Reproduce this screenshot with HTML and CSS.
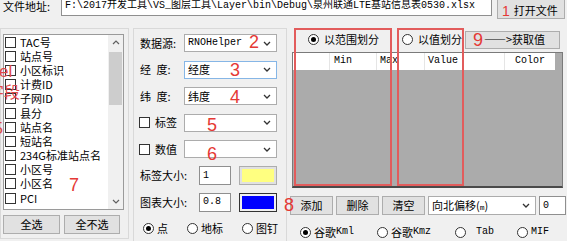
FILE: index.html
```html
<!DOCTYPE html>
<html lang="zh-CN">
<head>
  <meta charset="UTF-8">
  <title>图层工具</title>
  <link rel="stylesheet" href="styles.css">
</head>
<body>
<div class="toprow">
  <span class="file-label">文件地址:</span>
  <div class="pathbox mono">F:\2017开发工具\VS_图层工具\Layer\bin\Debug\泉州联通LTE基站信息表0530.xlsx</div>
  <button class="btn open-btn"><span class="num-in num-1">1</span>打开文件</button>
</div>

<div class="main">
  <div class="group fields">
    <div class="listbox">
      <div class="items">
        <div class="item"><span class="check"></span>TAC号</div>
        <div class="item"><span class="check"></span>站点号</div>
        <div class="item"><span class="check"></span>小区标识</div>
        <div class="item"><span class="check"></span>计费ID</div>
        <div class="item"><span class="check"></span>子网ID</div>
        <div class="item"><span class="check"></span>县分</div>
        <div class="item"><span class="check"></span>站点名</div>
        <div class="item"><span class="check"></span>短站名</div>
        <div class="item"><span class="check"></span>234G标准站点名</div>
        <div class="item"><span class="check"></span>小区号</div>
        <div class="item"><span class="check"></span>小区名</div>
        <div class="item"><span class="check"></span>PCI</div>
      </div>
      <div class="vscroll">
        <div class="arrow"><svg width="8" height="5" viewBox="0 0 8 5"><path d="M1 4l3-3 3 3" fill="none" stroke="#606060" stroke-width="1.2"/></svg></div>
        <div class="thumb"></div>
        <div class="track"></div>
        <div class="arrow"><svg width="8" height="5" viewBox="0 0 8 5"><path d="M1 1l3 3 3-3" fill="none" stroke="#606060" stroke-width="1.2"/></svg></div>
      </div>
    </div>
    <div class="btnrow">
      <button class="btn sel-all">全选</button>
      <button class="btn sel-none">全不选</button>
    </div>
  </div>

  <div class="group props">
    <div class="row">
      <span class="lbl">数据源:</span>
      <div class="combo"><span class="mono">RNOHelper</span><svg width="8" height="5" viewBox="0 0 8 5"><path d="M1 1l3 3 3-3" fill="none" stroke="#333" stroke-width="1.3"/></svg></div>
    </div>
    <div class="row">
      <span class="lbl">经&ensp;度:</span>
      <div class="combo focus"><span>经度</span><svg width="8" height="5" viewBox="0 0 8 5"><path d="M1 1l3 3 3-3" fill="none" stroke="#333" stroke-width="1.3"/></svg></div>
    </div>
    <div class="row">
      <span class="lbl">纬&ensp;度:</span>
      <div class="combo"><span>纬度</span><svg width="8" height="5" viewBox="0 0 8 5"><path d="M1 1l3 3 3-3" fill="none" stroke="#333" stroke-width="1.3"/></svg></div>
    </div>
    <div class="row">
      <span class="lbl chk-lbl"><span class="check"></span>标签</span>
      <div class="combo"><span></span><svg width="8" height="5" viewBox="0 0 8 5"><path d="M1 1l3 3 3-3" fill="none" stroke="#333" stroke-width="1.3"/></svg></div>
    </div>
    <div class="row">
      <span class="lbl chk-lbl"><span class="check"></span>数值</span>
      <div class="combo"><span></span><svg width="8" height="5" viewBox="0 0 8 5"><path d="M1 1l3 3 3-3" fill="none" stroke="#333" stroke-width="1.3"/></svg></div>
    </div>
    <div class="row">
      <span class="lbl lbl-wide">标签大小:</span>
      <div class="tbox mono">1</div>
      <div class="swatch swatch-yellow"><div></div></div>
    </div>
    <div class="row">
      <span class="lbl lbl-wide">图表大小:</span>
      <div class="tbox mono">0.8</div>
      <div class="swatch swatch-blue"><div></div></div>
    </div>
    <div class="row radios">
      <span class="opt"><span class="radio on"></span>点</span>
      <span class="opt"><span class="radio"></span>地标</span>
      <span class="opt"><span class="radio"></span>图钉</span>
    </div>
  </div>

  <div class="ranges">
    <div class="mode-row">
      <span class="opt"><span class="radio on"></span>以范围划分</span>
      <span class="opt mode-value"><span class="radio"></span>以值划分</span>
      <button class="btn fetch-btn"><span class="num-in num-9">9</span>——&gt;获取值</button>
    </div>
    <div class="grid">
      <div class="grid-head mono">
        <span class="col c0"></span>
        <span class="col c-min">Min</span>
        <span class="col c-max">Max</span>
        <span class="col c-val">Value</span>
        <span class="col c-color">Color</span>
      </div>
    </div>
    <div class="actions">
      <button class="btn act">添加</button>
      <button class="btn act">删除</button>
      <button class="btn act">清空</button>
      <div class="combo offset"><span>向北偏移(<span class="mono small">m</span>)</span><svg width="8" height="5" viewBox="0 0 8 5"><path d="M1 1l3 3 3-3" fill="none" stroke="#333" stroke-width="1.3"/></svg></div>
      <div class="tbox offset-val mono">0</div>
    </div>
    <div class="formats">
      <span class="opt f-kml"><span class="radio on"></span>谷歌<span class="mono">Kml</span></span>
      <span class="opt f-kmz"><span class="radio"></span>谷歌<span class="mono">Kmz</span></span>
      <span class="opt f-tab"><span class="radio"></span><span class="mono">Tab</span></span>
      <span class="opt f-mif"><span class="radio"></span><span class="mono">MIF</span></span>
    </div>
  </div>
</div>

<!-- red annotations drawn over the form -->
<div class="frame frame-range"></div>
<div class="frame frame-value"></div>
<span class="num n2">2</span>
<span class="num n3">3</span>
<span class="num n4">4</span>
<span class="num n5">5</span>
<span class="num n6">6</span>
<span class="num n7">7</span>
<span class="num n8">8</span>
<span class="side side-el">el</span>
<span class="side side-zd">字段</span>
<span class="side side-5">5</span>
</body>
</html>
```

FILE: styles.css
```css
* {
  box-sizing: border-box;
}

body {
  margin: 0;
  width: 567px;
  height: 241px;
  overflow: hidden;
  position: relative;
  background-color: #f0f0f0;
  font-family: "Noto Sans CJK SC", "Liberation Sans", sans-serif;
  font-size: 11px;
  line-height: 1;
  color: #000;
}

.mono {
  font-family: "Liberation Mono", "Noto Sans CJK SC", monospace;
  font-size: 10px;
}

.mono.small {
  font-size: 8px;
}

.btn {
  font: inherit;
  color: #000;
  background-color: #e1e1e1;
  border: 1px solid #adadad;
  padding: 0;
  margin: 0;
  display: flex;
  align-items: center;
  justify-content: center;
}

/* top row */
.toprow {
  display: flex;
  align-items: flex-start;
  height: 20px;
  margin-top: -4px;
}

.file-label {
  width: 61px;
  height: 20px;
  padding-left: 3px;
  display: flex;
  align-items: center;
}

.pathbox {
  width: 431px;
  height: 20px;
  background-color: #fff;
  border: 1px solid #8f8f8f;
  padding-left: 3px;
  display: flex;
  align-items: center;
  white-space: nowrap;
  overflow: hidden;
}

.open-btn {
  width: 68px;
  height: 20px;
  margin-left: 5px;
  margin-top: 3px;
  padding-top: 2px;
  justify-content: flex-start;
  padding-left: 4px;
}

.num-in {
  color: #e53935;
  font-family: "Liberation Sans", sans-serif;
}

.num-1 {
  font-size: 14px;
  margin-right: 4px;
  margin-top: 2px;
}

/* main area */
.main {
  display: flex;
  margin-top: 12px;
  height: 213px;
}

.group {
  border: 1px solid #d9d9d9;
}

.fields {
  width: 129px;
  height: 211px;
  padding: 5px 0 0 2px;
}

.listbox {
  width: 121px;
  height: 176px;
  background-color: #fff;
  border: 1px solid #9a9a9a;
  display: flex;
}

.items {
  flex: 1;
  padding-left: 1px;
}

.item {
  height: 14.2px;
  display: flex;
  align-items: center;
  white-space: nowrap;
}

.check {
  width: 11px;
  height: 11px;
  border: 1px solid #333;
  background-color: #fff;
  margin-right: 4px;
  flex-shrink: 0;
}

.vscroll {
  width: 15px;
  background-color: #f0f0f0;
  display: flex;
  flex-direction: column;
  align-items: center;
}

.arrow {
  height: 15px;
  display: flex;
  align-items: center;
  justify-content: center;
}

.thumb {
  width: 13px;
  height: 53px;
  margin-top: 2px;
  background-color: #cdcdcd;
}

.track {
  flex: 1;
}

.btnrow {
  display: flex;
  gap: 4px;
  margin-top: 5px;
}

.sel-all {
  width: 57px;
  height: 19px;
}

.sel-none {
  width: 56px;
  height: 19px;
}

/* middle group */
.props {
  margin-left: 4px;
  width: 154px;
  height: 230px;
  padding: 1px 0 0 6px;
}

.row {
  height: 26.5px;
  display: flex;
  align-items: center;
}

.lbl {
  width: 44px;
  white-space: nowrap;
}

.chk-lbl {
  display: flex;
  align-items: center;
  margin-left: -1px;
  width: 45px;
}

.chk-lbl .check {
  margin-right: 5px;
}

.lbl-wide {
  width: 59px;
}

.combo {
  width: 93px;
  height: 18px;
  background-color: #fff;
  border: 1px solid #acacac;
  display: flex;
  align-items: center;
  justify-content: space-between;
  padding: 0 5px 0 3px;
  white-space: nowrap;
}

.combo.focus {
  border-color: #86b6e6;
}

.tbox {
  width: 32px;
  height: 19px;
  background-color: #fff;
  border: 1px solid #8f8f8f;
  padding-left: 3px;
  display: flex;
  align-items: center;
}

.swatch {
  width: 38px;
  height: 19px;
  margin-left: 8px;
  padding: 2px;
  border: 1px solid #adadad;
  background-color: #e1e1e1;
}

.swatch div {
  width: 100%;
  height: 100%;
}

.swatch-yellow div {
  background-color: #ffff80;
}

.swatch-blue {
  border-color: #333;
  background-color: #f0f0f0;
}

.swatch-blue div {
  background-color: #0000ff;
}

.opt {
  display: flex;
  align-items: center;
  white-space: nowrap;
}

.radio {
  width: 11px;
  height: 11px;
  border: 1px solid #333;
  border-radius: 50%;
  background-color: #fff;
  margin-right: 3px;
  display: flex;
  align-items: center;
  justify-content: center;
  flex-shrink: 0;
}

.radio.on::after {
  content: "";
  width: 5px;
  height: 5px;
  border-radius: 50%;
  background-color: #000;
}

.radios {
  padding-left: 3px;
  gap: 19px;
}

/* right side */
.ranges {
  margin-left: 3px;
  flex: 1;
  display: flex;
  flex-direction: column;
}

.mode-row {
  height: 24px;
  display: flex;
  align-items: center;
  padding-left: 18px;
}

.mode-row .radio {
  margin-right: 5px;
}

.mode-value {
  margin-left: 23px;
}

.fetch-btn {
  width: 95px;
  height: 18px;
  margin-left: auto;
  margin-right: 7px;
  justify-content: flex-start;
  padding-left: 7px;
}

.num-9 {
  font-size: 18px;
  margin-right: 1px;
}

.grid {
  margin-left: 2px;
  width: 271px;
  height: 137px;
  background-color: #ababab;
  border: 1px solid #7a7a7a;
  border-bottom: 2px solid #4a4a4a;
}

.grid-head {
  width: 262px;
  height: 17px;
  background-color: #fff;
  display: flex;
}

.col {
  height: 100%;
  display: flex;
  align-items: center;
  border-right: 1px solid #e5e5e5;
  padding-left: 4px;
}

.c0 { width: 37px; }
.c-min { width: 47px; }
.c-max { width: 48px; padding-left: 3px; }
.c-val { width: 80px; padding-left: 3px; }
.c-color { flex: 1; padding-left: 10px; border-right: none; }

.actions {
  display: flex;
  align-items: center;
  gap: 3px;
  margin-top: 8px;
  height: 19px;
}

.act {
  width: 43px;
  height: 19px;
}

.offset {
  width: 108px;
  height: 19px;
}

.offset-val {
  width: 27px;
}

.formats {
  display: flex;
  align-items: center;
  margin-top: 8px;
  height: 18px;
  padding-left: 10px;
}

.f-kml { width: 77px; }
.f-kmz { width: 78px; }
.f-tab { width: 62px; }
.f-tab .radio { margin-right: 10px; }

/* annotations */
.frame {
  position: absolute;
  top: 28px;
  height: 158px;
  border: 2px solid #e25c5c;
}

.frame-range {
  left: 294px;
  width: 98px;
}

.frame-value {
  left: 397px;
  width: 67px;
}

.num {
  position: absolute;
  color: #e53935;
  font-family: "Liberation Sans", sans-serif;
  font-size: 18px;
  line-height: 1;
}

.n2 { left: 249px; top: 33px; }
.n3 { left: 230px; top: 61px; }
.n4 { left: 230px; top: 88px; }
.n5 { left: 207px; top: 116px; }
.n6 { left: 207px; top: 145px; }
.n7 { left: 69px; top: 176px; }
.n8 { left: 284px; top: 196px; }

.side {
  position: absolute;
  color: #e04848;
  font-size: 16px;
  line-height: 1;
}

.side-el {
  left: -1px;
  top: 63px;
  font-family: "Liberation Sans", sans-serif;
  font-size: 17px;
}

.side-zd {
  left: -12px;
  top: 83px;
}

.side-5 {
  left: -6px;
  top: 121px;
  font-family: "Liberation Sans", sans-serif;
}
```
